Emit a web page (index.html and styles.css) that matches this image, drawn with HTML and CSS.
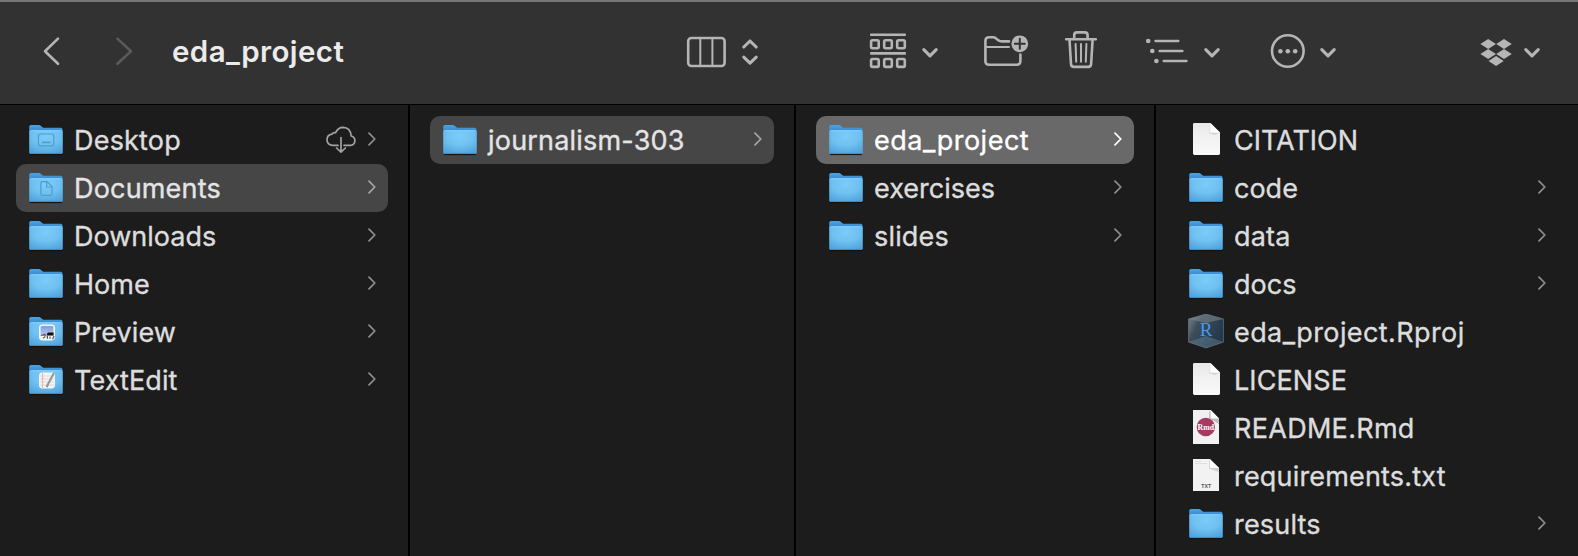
FILE: index.html
```html
<!DOCTYPE html>
<html lang="en">
<head>
<meta charset="utf-8">
<title>eda_project</title>
<link rel="stylesheet" href="styles.css">
</head>
<body>
<svg class="defs" width="0" height="0" aria-hidden="true">
  <defs>
    <radialGradient id="front" cx=".5" cy=".25" r=".8"><stop offset="0" stop-color="#7dccf9"/><stop offset=".5" stop-color="#6fc1f1"/><stop offset="1" stop-color="#50a3dc"/></radialGradient>
    <linearGradient id="back" x1="0" y1="0" x2="0" y2="1"><stop offset="0" stop-color="#4da5df"/><stop offset="1" stop-color="#2f79c6"/></linearGradient>
    <linearGradient id="paper" x1="0" y1="0" x2="0" y2="1"><stop offset="0" stop-color="#e9e9e9"/><stop offset="1" stop-color="#fafafa"/></linearGradient>
    <linearGradient id="cube" x1="0" y1="0" x2="1" y2=".5"><stop offset="0" stop-color="#7b868c"/><stop offset=".35" stop-color="#3c4d59"/><stop offset="1" stop-color="#22394c"/></linearGradient>
    <linearGradient id="sky" x1="0" y1="0" x2="0" y2="1"><stop offset="0" stop-color="#7f9fdc"/><stop offset="1" stop-color="#bccbea"/></linearGradient>
  </defs>
  <symbol id="folder" viewBox="0 0 36 36">
    <path d="M1.2 10V4.8Q1.2 3 3 3H10.6Q12 3 13 3.9L15.2 5.7H32.8Q34.6 5.7 34.6 7.5V12H1.2Z" fill="url(#back)"/>
    <path d="M2 32.6H34" stroke="#101010" stroke-width="1"/>
    <rect x="1.2" y="8.2" width="33.6" height="23.8" rx="1.8" fill="url(#front)"/>
    <path d="M2.4 8.8H33.6" stroke="#8bd5fb" stroke-width="1"/>
    <path d="M2.2 31.4H33.8" stroke="#3c8fcb" stroke-width="1"/>
  </symbol>
  <symbol id="doc" viewBox="0 0 36 36">
    <path d="M6.2 1H22.4L32 10.4V31.6Q32 33 30.6 33H6.4Q5 33 5 31.6V2.2Q5 1 6.2 1Z" fill="url(#paper)"/>
    <path d="M21.6 1.4V10.8H31.6L27 13L21 11Z" fill="#d2d2d2"/>
    <path d="M22.4 1L32 10.4H24Q22.4 10.4 22.4 9Z" fill="#fdfdfd"/>
  </symbol>
  <symbol id="chev" viewBox="0 0 8 14"><path d="M1 1.2L6.8 7L1 12.8" fill="none" stroke="currentColor" stroke-width="1.7" stroke-linecap="round" stroke-linejoin="round"/></symbol>
  <symbol id="down" viewBox="0 0 20 104"><path d="M3.8 49.6L10 55.8L16.2 49.6" class="line heavy"/></symbol>
</svg>

<header class="toolbar">
  <div class="nav">
    <svg width="30" height="104" viewBox="36 0 30 104"><path class="line" d="M58 38.6L45 51.2L58 63.8"/></svg>
    <svg class="dim" width="30" height="104" viewBox="110 0 30 104"><path class="line" d="M117.4 38.6L131 51.2L117.4 63.8"/></svg>
  </div>
  <h1 class="title">eda_project</h1>
  <div class="tools">
    <div class="tool view">
      <svg width="84" height="104" viewBox="680 0 84 104"><rect class="line" x="688.2" y="38" width="36.4" height="28" rx="3.2"/><path class="line thin" d="M700.3 38V66M712.4 38V66"/><path class="line heavy" d="M743.8 47L750 41L756.2 47M743.8 57.2L750 63.2L756.2 57.2"/></svg>
    </div>
    <div class="tool group">
      <svg width="50" height="104" viewBox="865 0 50 104"><path class="line" d="M871.2 34.7H904.8M871.2 53.4H904.8"/><g class="line"><rect x="871.1" y="40.3" width="7.6" height="7.9" rx="1.4"/><rect x="884.2" y="40.3" width="7.6" height="7.9" rx="1.4"/><rect x="897.2" y="40.3" width="7.6" height="7.9" rx="1.4"/><rect x="871.1" y="59" width="7.6" height="7.9" rx="1.4"/><rect x="884.2" y="59" width="7.6" height="7.9" rx="1.4"/><rect x="897.2" y="59" width="7.6" height="7.9" rx="1.4"/></g></svg>
      <svg class="more" width="20" height="104"><use href="#down"/></svg>
    </div>
    <svg class="tool newfolder" width="50" height="104" viewBox="980 0 50 104"><path class="line" d="M1009 41.4H1002Q999.8 41.4 998.3 40.2L996 38.4Q994.8 37.3 993 37.3H989.2Q985.4 37.3 985.4 41V61Q985.4 64.8 989.2 64.8H1016.6Q1020.4 64.8 1020.4 61V54.6"/><path class="line thin" d="M986 46.9H1009"/><circle cx="1019.8" cy="43.8" r="8.4" class="fill"/><path class="cut" d="M1014.8 43.8H1024.8M1019.8 38.8V48.8"/></svg>
    <svg class="tool trash" width="40" height="104" viewBox="1060 0 40 104"><path class="line" d="M1066.2 39.2H1095.8M1074.2 39V35.2Q1074.2 32.4 1077 32.4H1084.8Q1087.6 32.4 1087.6 35.2V39M1069.5 39.5L1071 64.2Q1071.2 66.9 1073.8 66.9H1088.3Q1090.9 66.9 1091.1 64.2L1092.6 39.5"/><path class="line thin" d="M1075.6 44L1076.2 61.8M1081 44V61.8M1086.4 44L1085.8 61.8"/></svg>
    <div class="tool list">
      <svg width="50" height="104" viewBox="1142 0 50 104"><path class="line" d="M1155.6 41H1178.2M1159.7 51H1182.3M1163.8 61H1186.4"/><g class="fill"><circle cx="1148.2" cy="41" r="2.3"/><circle cx="1152.3" cy="51" r="2.3"/><circle cx="1156.4" cy="61" r="2.3"/></g></svg>
      <svg class="more" width="20" height="104"><use href="#down"/></svg>
    </div>
    <div class="tool actions">
      <svg width="40" height="104" viewBox="1268 0 40 104"><circle class="line" cx="1287.8" cy="51" r="15.8"/><g class="fill"><circle cx="1280.4" cy="51.2" r="2.3"/><circle cx="1287.8" cy="51.2" r="2.3"/><circle cx="1295.2" cy="51.2" r="2.3"/></g></svg>
      <svg class="more" width="20" height="104"><use href="#down"/></svg>
    </div>
    <div class="tool dropbox">
      <svg width="40" height="104" viewBox="1476 0 40 104"><path class="fill" d="M1488.2 38.9L1496 43.9L1488.2 48.9L1480.4 43.9ZM1504 38.9L1511.8 43.9L1504 48.9L1496.2 43.9ZM1488.2 49L1496 54L1488.2 59L1480.4 54ZM1504 49L1511.8 54L1504 59L1496.2 54ZM1496.1 55.9L1503.7 61L1496.1 66.1L1488.5 61Z"/></svg>
      <svg class="more" width="20" height="104"><use href="#down"/></svg>
    </div>
  </div>
</header>

<main class="browser">
  <ul class="column c1">
    <li class="row"><svg class="icon" viewBox="0 0 36 36"><use href="#folder"/><g class="emboss"><rect x="10.4" y="12" width="15.4" height="11.8" rx="2"/><path d="M14 20.4H22.6" stroke-width="1.6"/></g></svg><span class="name n-desktop">Desktop</span>
      <svg class="cloud" width="32" height="28" viewBox="325 126 32 28"><path d="M338 145.4H332.5Q327 144.8 327 139.8Q327 135 332 134.2Q333 132.2 335.6 132.6Q338 127.3 343 127.3Q350.6 127.6 351.2 136Q354.9 137 354.9 140.8Q354.7 145 350.4 145.4H344M341 137.6V152M336.6 148L341 152.2L345.4 148" fill="none" stroke="#a3a3a3" stroke-width="1.7" stroke-linecap="round" stroke-linejoin="round"/></svg>
      <svg class="chev"><use href="#chev"/></svg></li>
    <li class="row open"><svg class="icon" viewBox="0 0 36 36"><use href="#folder"/><g class="emboss"><path d="M14.4 11.6H19L24 16.6V23.6Q24 25.4 22.2 25.4H14.6Q12.8 25.4 12.8 23.6V13.2Q12.8 11.6 14.4 11.6ZM18.6 12V17H23.6"/></g></svg><span class="name n-documents">Documents</span><svg class="chev"><use href="#chev"/></svg></li>
    <li class="row"><svg class="icon"><use href="#folder"/></svg><span class="name n-downloads">Downloads</span><svg class="chev"><use href="#chev"/></svg></li>
    <li class="row"><svg class="icon"><use href="#folder"/></svg><span class="name n-home">Home</span><svg class="chev"><use href="#chev"/></svg></li>
    <li class="row"><svg class="icon" viewBox="0 0 36 36"><use href="#folder"/><rect x="11" y="10.6" width="16" height="15.8" rx="3.4" fill="#f4f5f6"/><rect x="12.6" y="12" width="12.8" height="9.6" rx="1.4" fill="url(#sky)"/><path d="M12.6 21L17 19.4L19 21.8H12.6Z" fill="#5c6670"/><path d="M19 19.4L20 18.4H25.6V21.6H19Z" fill="#111"/><path d="M15 24.4L17.4 22.4M19.4 24.8V22M22 24.8V22.4M24.6 25.2L26 22" stroke="#555" stroke-width="1.2"/></svg><span class="name n-preview">Preview</span><svg class="chev"><use href="#chev"/></svg></li>
    <li class="row"><svg class="icon" viewBox="0 0 36 36"><use href="#folder"/><rect x="11" y="10.6" width="16" height="15.8" rx="3.4" fill="#f6f4f3"/><path d="M12 14H26M12 17H26M12 20H26M12 23H26" stroke="#d5d2d2" stroke-width=".8"/><path d="M14.6 11V26" stroke="#eaa7a0" stroke-width=".9"/><path d="M25.8 11.4L18.6 25" stroke="#7d8388" stroke-width="2"/><path d="M26 11.8L19.4 24" stroke="#b9bec2" stroke-width=".7"/></svg><span class="name n-textedit">TextEdit</span><svg class="chev"><use href="#chev"/></svg></li>
  </ul>
  <ul class="column c2">
    <li class="row open"><svg class="icon"><use href="#folder"/></svg><span class="name n-journalism">journalism-303</span><svg class="chev"><use href="#chev"/></svg></li>
  </ul>
  <ul class="column c3">
    <li class="row selected"><svg class="icon"><use href="#folder"/></svg><span class="name n-eda">eda_project</span><svg class="chev"><use href="#chev"/></svg></li>
    <li class="row"><svg class="icon"><use href="#folder"/></svg><span class="name n-exercises">exercises</span><svg class="chev"><use href="#chev"/></svg></li>
    <li class="row"><svg class="icon"><use href="#folder"/></svg><span class="name n-slides">slides</span><svg class="chev"><use href="#chev"/></svg></li>
  </ul>
  <ul class="column c4">
    <li class="row"><svg class="icon"><use href="#doc"/></svg><span class="name n-citation">CITATION</span></li>
    <li class="row"><svg class="icon"><use href="#folder"/></svg><span class="name n-code">code</span><svg class="chev"><use href="#chev"/></svg></li>
    <li class="row"><svg class="icon"><use href="#folder"/></svg><span class="name n-data">data</span><svg class="chev"><use href="#chev"/></svg></li>
    <li class="row"><svg class="icon"><use href="#folder"/></svg><span class="name n-docs">docs</span><svg class="chev"><use href="#chev"/></svg></li>
    <li class="row"><svg class="icon" viewBox="0 0 36 36"><path d="M18 0L35.6 5V28L18 34L.4 28V5Z" fill="url(#cube)"/><path d="M18 0L35.6 5L18 9L.4 5Z" fill="#8b9498" opacity=".45"/><path d="M.4 28L18 22L35.6 28L18 34Z" fill="#8b9da8" opacity=".3"/><path d="M18 0L35.6 5V28L18 34L.4 28V5Z" fill="none" stroke="#71828b" stroke-width=".6"/><text x="18" y="21.6" text-anchor="middle" class="r-letter">R</text><path d="M12 24.6H16.4M14.6 25V28M19.4 27.4Q20.6 24.4 24 25" stroke="#2f6fa4" stroke-width="1" fill="none"/></svg><span class="name n-rproj">eda_project.Rproj</span></li>
    <li class="row"><svg class="icon"><use href="#doc"/></svg><span class="name n-license">LICENSE</span></li>
    <li class="row"><svg class="icon" viewBox="0 0 36 36"><path d="M5 0H22.6L31 8.6V34H5Z" fill="#f1f1f1"/><path d="M21.4 .6L21 8L30.8 14V8.6Z" fill="#bdbdbd"/><path d="M22.6 0L31 8.6H24.2Q22.6 8.6 22.6 7Z" fill="#fff"/><circle cx="17.8" cy="17" r="9.2" fill="#a63a60"/><text x="17.8" y="19.8" text-anchor="middle" class="rmd">Rmd</text></svg><span class="name n-readme">README.Rmd</span></li>
    <li class="row"><svg class="icon" viewBox="0 0 36 36"><path d="M5 1H21.8L31 10V33H5Z" fill="#f2f2f2"/><path d="M7 3.6H13M7 5.6H19" stroke="#d6d6d6" stroke-width=".8"/><path d="M21 1.6V10.6L30.8 14V10Z" fill="#cfcfcf"/><path d="M21.8 1L31 10H23.4Q21.8 10 21.8 8.4Z" fill="#fff"/><text x="18.2" y="30.4" text-anchor="middle" class="txt">TXT</text></svg><span class="name n-requirements">requirements.txt</span></li>
    <li class="row"><svg class="icon"><use href="#folder"/></svg><span class="name n-results">results</span><svg class="chev"><use href="#chev"/></svg></li>
  </ul>
</main>
</body>
</html>
```

FILE: styles.css
```css
* { box-sizing: border-box; }
body {
  margin: 0;
  height: 556px;
  overflow: hidden;
  display: flex;
  flex-direction: column;
  background: #1c1c1c;
  color: #dddddd;
  font-family: Inter, "Liberation Sans", sans-serif;
}
svg { display: block; flex: none; }
.defs { height: 0; flex: none; }

.toolbar {
  flex: none;
  height: 105px;
  display: flex;
  background: linear-gradient(#767676 2px, #323232 2px);
  border-bottom: 1px solid #000;
  color: #b5b5b5;
}
.nav { display: flex; gap: 44px; padding-left: 36px; width: 172px; }
.dim { color: #5a5a5a; }
.title {
  margin: 0;
  width: 508px;
  line-height: 103px;
  font-size: 29.5px;
  font-weight: 600;
  letter-spacing: 0.4px;
  color: #ebebeb;
}
.tools { display: flex; }
.tool { display: flex; }
.group { margin-left: 101px; }
.group .more { margin-left: 5px; }
.newfolder { margin-left: 40px; }
.trash { margin-left: 30px; }
.list { margin-left: 42px; }
.list .more { margin-left: 10px; }
.actions { margin-left: 46px; }
.actions .more { margin-left: 10px; }
.dropbox { margin-left: 138px; }
.dropbox .more { margin-left: 6px; }

.line { fill: none; stroke: currentColor; stroke-width: 2.6; stroke-linecap: round; stroke-linejoin: round; }
.thin { stroke-width: 2; }
.heavy { stroke-width: 3.1; }
.fill { fill: currentColor; }
.cut { fill: none; stroke: #323232; stroke-width: 2; stroke-linecap: round; }

.browser { flex: 1; display: flex; min-height: 0; }
.column {
  margin: 0;
  padding: 11px 20px 0;
  list-style: none;
  border-right: 2px solid #000;
  flex: none;
}
.c1 { width: 410px; padding-left: 16px; }
.c2 { width: 386px; }
.c3 { width: 360px; }
.c4 { width: 422px; border-right: 0; }
.row {
  height: 48px;
  display: flex;
  align-items: center;
  padding: 0 12px;
  border-radius: 10px;
}
.open { background: #464646; color: #e4e4e4; }
.selected { background: #696969; color: #fff; }
.icon { width: 36px; height: 36px; }
.name {
  margin-left: 10px;
  padding-top: 2px;
  flex: 1;
  font-size: 27px;
  line-height: 48px;
  white-space: nowrap;
  -webkit-text-stroke: 0.35px currentColor;
}
.n-desktop, .n-journalism { letter-spacing: 0.2px; }
.n-documents, .n-requirements, .n-results, .n-slides, .n-data { letter-spacing: 0.18px; }
.n-preview, .n-textedit, .n-license { letter-spacing: 0.1px; }
.n-eda { letter-spacing: 0.5px; }
.n-rproj { letter-spacing: 0.4px; }
.n-readme { letter-spacing: 0.3px; }
.cloud { margin-right: 11px; }
.chev { width: 8px; height: 14px; margin-bottom: 2px; color: #8f8f8f; }
.open .chev { color: #a6a6a6; }
.selected .chev { color: #fff; }
.emboss { fill: none; stroke: #4f9dcd; stroke-width: 1.2; }
.r-letter { font: 19px "Liberation Serif", serif; fill: #4699ee; }
.rmd { font: bold 7.8px "Liberation Serif", serif; fill: #fff; }
.txt { font: bold 5.2px "Liberation Sans", sans-serif; fill: #555; }
```
